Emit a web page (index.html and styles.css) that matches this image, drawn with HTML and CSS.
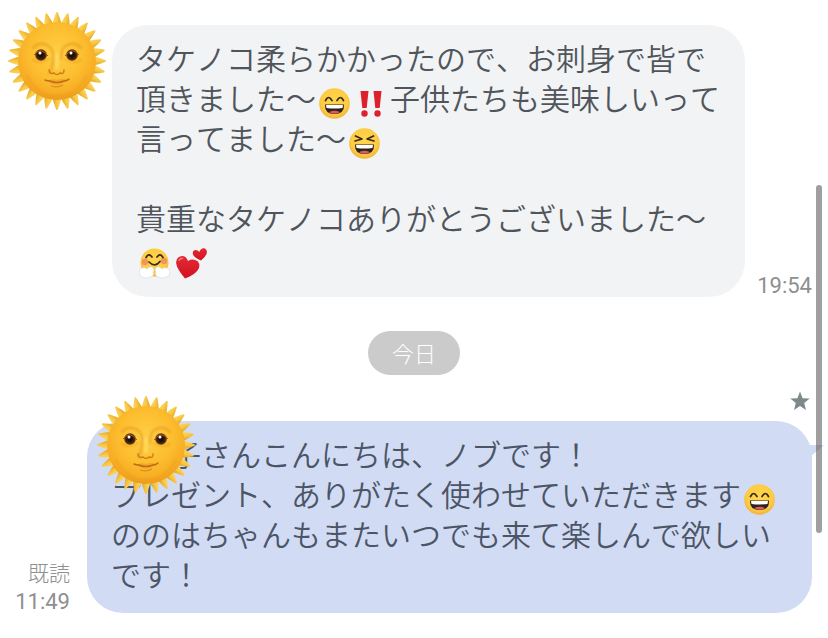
FILE: index.html
```html
<!DOCTYPE html>
<html lang="ja">
<head>
<meta charset="utf-8">
<meta name="viewport" content="width=device-width, initial-scale=1">
<title>トーク</title>
<link rel="stylesheet" href="styles.css">
</head>
<body>
<svg class="defs" width="0" height="0" aria-hidden="true">
  <defs>
    <radialGradient id="disc" cx="50%" cy="40%" r="62%">
      <stop offset="0" stop-color="#ffcf45"/>
      <stop offset=".55" stop-color="#fcbe2f"/>
      <stop offset=".85" stop-color="#f7ac24"/>
      <stop offset="1" stop-color="#e99518"/>
    </radialGradient>
    <linearGradient id="ray" x1="0" x2="1" y1="0" y2="0">
      <stop offset="0" stop-color="#fbd866"/>
      <stop offset=".5" stop-color="#f8c843"/>
      <stop offset="1" stop-color="#e0a22c"/>
    </linearGradient>
    <radialGradient id="iris" cx="50%" cy="50%" r="50%">
      <stop offset="0" stop-color="#160903"/>
      <stop offset=".5" stop-color="#2b1409"/>
      <stop offset="1" stop-color="#6b3a1c"/>
    </radialGradient>
    <radialGradient id="face" cx="50%" cy="42%" r="58%">
      <stop offset="0" stop-color="#ffd64d"/>
      <stop offset=".75" stop-color="#fdcb42"/>
      <stop offset="1" stop-color="#efb238"/>
    </radialGradient>
    <linearGradient id="heart" x1="0" x2="0" y1="0" y2="1">
      <stop offset="0" stop-color="#e22a35"/>
      <stop offset="1" stop-color="#d3121f"/>
    </linearGradient>
    <filter id="soft" x="-20%" y="-20%" width="140%" height="140%"><feGaussianBlur stdDeviation="1"/></filter>
    <path id="spike" d="M-4.500-37C-3.500-42-2-45-.8-48.500Q0-49.500 .8-48.500C2-45 3.500-42 4.500-37Z" fill="url(#ray)"/>
    <g id="spikes">
      <use href="#spike"/>
      <use href="#spike" transform="rotate(12.857)"/>
      <use href="#spike" transform="rotate(25.714)"/>
      <use href="#spike" transform="rotate(38.571)"/>
    </g>
    <symbol id="sun" viewBox="-49 -49 98 98">
      <use href="#spikes"/>
      <use href="#spikes" transform="rotate(51.429)"/>
      <use href="#spikes" transform="rotate(102.857)"/>
      <use href="#spikes" transform="rotate(154.286)"/>
      <use href="#spikes" transform="rotate(205.714)"/>
      <use href="#spikes" transform="rotate(257.143)"/>
      <use href="#spikes" transform="rotate(308.571)"/>
      <circle r="39" fill="url(#disc)"/>
      <g fill="none" stroke="#d98212" stroke-linecap="round" filter="url(#soft)">
        <path d="M-24-13Q-17-21-7-14Q-3-11-4 0Q-5 8-8 12M24-13Q17-21 7-14Q4-10 4-2" stroke-width="2" opacity=".5"/>
        <path d="M-24-1Q-16 3-8-2M24-1Q16 3 8-2" stroke-width="2" opacity=".35"/>
        <path d="M-30 15Q-20 34 0 35Q20 34 30 15" stroke-width="2" opacity=".25"/>
        <path d="M0-6V7" stroke="#ffdc62" stroke-width="3"/>
      </g>
      <path d="M-8 9Q-7 14-3 12Q0 15 3 12Q7 14 7 9" fill="none" stroke="#cf7f1a" stroke-width="1.500" stroke-linecap="round"/>
      <path d="M-22-7Q-16-13-10-6Q-16-2-22-7ZM22-7Q16-13 9-6Q16-2 22-7Z" fill="#e3ae4e"/>
      <circle cx="-16" cy="-6" r="5.800" fill="url(#iris)"/>
      <circle cx="15" cy="-6" r="5.800" fill="url(#iris)"/>
      <path d="M-23-6Q-16-15-9-5M22-6Q15-15 8-5" fill="none" stroke="#a85b12" stroke-width="1"/>
      <circle cx="-17" cy="-8" r="1.500" fill="#fff"/>
      <circle cx="14" cy="-8" r="1.500" fill="#fff"/>
      <path d="M-10 20Q-5 17 0 19Q5 17 11 19Q0 28-10 20Z" fill="#f3a62b"/>
      <path d="M-12 19Q-10 20-7 20Q0 23 7 20Q10 20 12 18" fill="none" stroke="#bd6d14" stroke-width="1.400" stroke-linecap="round"/>
      <path d="M-6 25Q0 27 6 24" fill="none" stroke="#dc8b1e" stroke-width="1.200"/>
    </symbol>
    <g id="laugh">
      <circle cx="15.500" cy="15.500" r="15.300" fill="url(#face)"/>
      <path d="M6 16.500H25Q25.500 26 15.500 26Q5.500 26 6 16.500Z" fill="#2d211d"/>
      <path d="M7 17H24L23.500 20Q15.500 21 7.500 20Z" fill="#fff"/>
      <path d="M10 24.300Q12 22.500 15.500 22.800Q19 22.500 21 24.300Q15.500 27 10 24.300Z" fill="#e0575e"/>
    </g>
    <symbol id="grin" viewBox="0 0 31 31">
      <use href="#laugh"/>
      <path d="M6.500 12.500Q9.500 6.500 13 12.500M18 12.500Q21.500 6.500 24.500 12.500" fill="none" stroke="#38291f" stroke-width="1.700" stroke-linecap="round"/>
    </symbol>
    <symbol id="squint" viewBox="0 0 31 31">
      <use href="#laugh"/>
      <path d="M6.500 8L13 11L6 13M24.500 8L18 11L25 13" fill="none" stroke="#38291f" stroke-width="1.700" stroke-linecap="round" stroke-linejoin="round"/>
    </symbol>
    <symbol id="bang" viewBox="0 0 31 31">
      <path d="M4.500 3H12.500L10.700 20H6.300ZM17.500 3H25.500L23.700 20H19.300Z" fill="#dd202d"/>
      <circle cx="8.500" cy="25.500" r="3.200" fill="#dd202d"/>
      <circle cx="21.500" cy="25.500" r="3.200" fill="#dd202d"/>
    </symbol>
    <symbol id="hug" viewBox="0 0 31 31">
      <circle cx="15.500" cy="14.500" r="14" fill="url(#face)"/>
      <circle cx="6" cy="14" r="3.200" fill="#f3955b"/>
      <circle cx="25" cy="13" r="3.200" fill="#f3955b"/>
      <path d="M7 9.500Q10 4.500 13 9M18 9Q21 4.500 24 9.500M10 14Q16 20 21 13.500" fill="none" stroke="#38291f" stroke-width="1.700" stroke-linecap="round"/>
      <path d="M.5 25Q-.5 21 3 20Q6 19 8 21Q12 17 14 20Q16 22 14 24Q16 27 12 29Q7 31 3 29Q0 28 .5 25ZM30.500 25Q31.500 21 28 20Q25 19 23 21Q19 17 17 20Q15 22 17 24Q15 27 19 29Q24 31 28 29Q31 28 30.500 25Z" fill="#fff" stroke="#d8d8d8" stroke-width=".6"/>
    </symbol>
    <symbol id="hearts" viewBox="0 0 31 31">
      <path d="M9 30.500Q1 21 .2 15.500Q-.2 9.500 5 8.200Q10 7.500 12 13Q17 10 22 13.500Q25 18 21.500 22.500Q18 27 9 30.500Z" fill="url(#heart)"/>
      <path d="M25 12.500Q18 9.500 17 6.500Q16 2.500 19.500 2Q22 2 23.300 4Q25-.3 28.500 .3Q32 2 30.500 6Q29 9.500 25 12.500Z" fill="url(#heart)"/>
      <path d="M3 12.500Q4 10.300 6.500 10.300" fill="none" stroke="#ff7a7d" stroke-width="1.500" stroke-linecap="round"/>
    </symbol>
  </defs>
</svg>

<main class="chat">
  <article class="message received">
    <svg class="sun" role="img" aria-label="太陽"><use href="#sun"/></svg>
    <p class="bubble">タケノコ柔らかかったので、お刺身で皆で<br>頂きました〜<svg class="emoji" aria-hidden="true"><use href="#grin"/></svg><svg class="emoji" aria-hidden="true"><use href="#bang"/></svg>子供たちも美味しいって<br>言ってました〜<svg class="emoji" aria-hidden="true"><use href="#squint"/></svg><br><br>貴重なタケノコありがとうございました〜<br><svg class="emoji" aria-hidden="true"><use href="#hug"/></svg><svg class="emoji" aria-hidden="true"><use href="#hearts"/></svg></p>
    <div class="meta"><time>19:54</time></div>
  </article>

  <div class="date">今日</div>

  <svg class="star" viewBox="0 0 20 20" aria-hidden="true"><path d="M10 .5L12.600 7.200L19.700 7.500L14.200 12L16 19L10 15.100L4 19L5.800 12L.3 7.500L7.400 7.200Z"/></svg>

  <article class="message sent">
    <div class="meta"><span>既読</span><time>11:49</time></div>
    <p class="bubble">　　子さんこんにちは、ノブです！<br>プレゼント、ありがたく使わせていただきます<svg class="emoji" aria-hidden="true"><use href="#grin"/></svg><br>ののはちゃんもまたいつでも来て楽しんで欲しい<br>です！<svg class="sun sticker" aria-hidden="true"><use href="#sun"/></svg></p>
  </article>
</main>
<div class="scrollbar"></div>
</body>
</html>
```

FILE: styles.css
```css
body {
  margin: 0;
  background: #fff;
  color: #50555b;
  font-family: "Noto Sans CJK JP", sans-serif;
  font-weight: 350;
  font-kerning: none;
}

.defs {
  position: absolute;
}

.chat {
  display: flex;
  flex-direction: column;
  padding: 12px 8px 24px;
}

.message {
  display: flex;
  align-items: flex-end;
  margin-right: 8px;
}

.received {
  gap: 12px;
}

.sun {
  width: 98px;
  height: 98px;
  flex: none;
}

.received .sun {
  align-self: flex-start;
  margin-right: -6px;
}

.bubble {
  position: relative;
  flex: 1;
  margin: 0;
  padding: 12px 24px 20px;
  border-radius: 36px;
  font-size: 30px;
  line-height: 40px;
}

.received .bubble {
  margin-top: 13px;
  background: #f1f3f5;
}

.sent .bubble {
  background: #d2dbf4;
  color: #4b5566;
  padding-right: 20px;
}

.sent .bubble::after {
  content: "";
  position: absolute;
  z-index: 2;
  top: 24px;
  right: -12px;
  width: 14px;
  height: 12px;
  background: linear-gradient(90deg, #d2dbf4 6px, #898f9d 6px, #898f9d 12px, #d2dbf4 12px);
  clip-path: polygon(0 0, 100% 0, 0 100%);
}

.emoji {
  width: 31px;
  height: 31px;
  margin: 0 3px -3px;
  vertical-align: -6px;
}

.meta {
  display: flex;
  flex-direction: column;
  align-items: flex-end;
  gap: 6px;
  color: #8d8f90;
  font-family: Roboto, "Noto Sans CJK JP", sans-serif;
  font-size: 22px;
  font-weight: 400;
  line-height: 22px;
}

.meta span {
  font-size: 21px;
  font-weight: 300;
}

.date {
  align-self: center;
  margin-top: 34px;
  padding: 0 24px 2px;
  border-radius: 22px;
  background: #cbcbcb;
  color: #fff;
  font-size: 22px;
  font-weight: 300;
  line-height: 42px;
}

.star {
  align-self: flex-end;
  width: 20px;
  height: 20px;
  margin: 16px 10px 10px;
  fill: #7f898c;
}

.sent .meta {
  width: 62px;
  margin-right: 17px;
}

.sticker {
  position: absolute;
  top: -25px;
  left: 10px;
}

.scrollbar {
  position: fixed;
  top: 185px;
  right: 6px;
  width: 6px;
  height: 348px;
  border-radius: 3px;
  background: #9f9f9f;
}
```
